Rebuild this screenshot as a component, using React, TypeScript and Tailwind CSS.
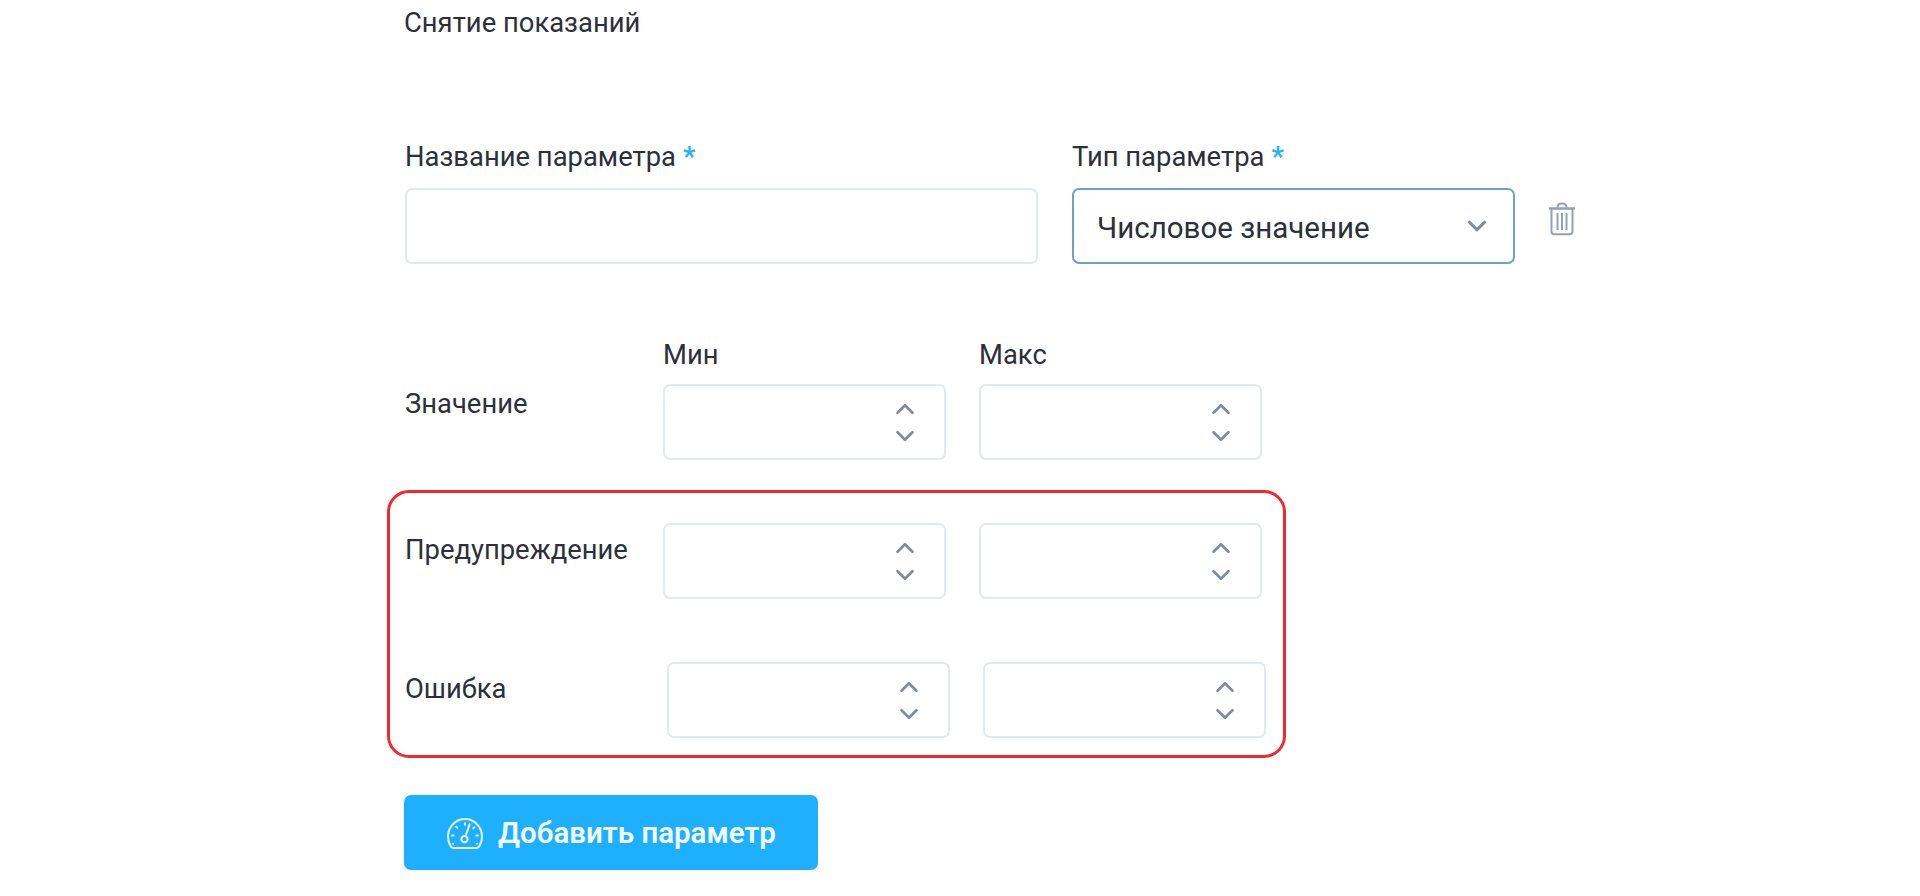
import { ChevronDown, ChevronUp } from 'lucide-react';

const TrashIcon = () => (
  <svg width="30" height="34" viewBox="0 0 30 34" fill="none" stroke="#94a1b0" strokeWidth="2" strokeLinejoin="round">
    <path d="M2 6.500h26" strokeWidth="2.500" />
    <path d="M10.500 5.500c0-2.500 1.500-4 4.500-4s4.500 1.500 4.500 4" />
    <path d="M4.500 7v22.500c0 1.800 1 2.800 2.800 2.800h15.400c1.800 0 2.800-1 2.800-2.800V7" />
    <path d="M10.500 11v17M15 11v17M19.500 11v17" />
  </svg>
);

const GaugeIcon = () => (
  <svg width="38" height="33" viewBox="0 0 36 32" fill="none" stroke="#e3f5ff" strokeWidth="2" strokeLinecap="round" strokeLinejoin="round">
    <path d="M7 30h22c1.500 0 2.400-.6 3-1.800A16.500 16.500 0 0 0 34.500 19C34.500 9.500 27 2 18 2S1.500 9.500 1.500 19c0 3.400.9 6.500 2.500 9.200.6 1.200 1.500 1.800 3 1.800Z" />
    <circle cx="17.500" cy="21.500" r="3" />
    <path d="M18.500 18.500 22.500 7" />
    <path d="M18 6v1.500M9.500 9.500l1 1M5.500 18H7M29 18h1.500M27 10l-1 1M6.500 26h0M29.500 26h0" />
  </svg>
);

const RequiredMark = () => <span className="ml-[7px] font-bold text-[#27b0fb]">*</span>;

const NumberField = () => (
  <div className="flex h-[76px] w-[283px] shrink-0 flex-col items-end justify-center rounded-[7px] border-2 border-[#e4e9ee] bg-white pr-[24px]">
    <ChevronUp size={30} strokeWidth={2.1} className="mb-[-3px] text-[#7f8b99]" />
    <ChevronDown size={30} strokeWidth={2.1} className="text-[#7f8b99]" />
  </div>
);

const LimitRow = ({ label, shift, labelTop }: { label: string; shift?: boolean; labelTop: string }) => (
  <div className="flex">
    <div className={`w-[258px] shrink-0 text-[27.400px] leading-[34px] text-[#2c3038] ${labelTop}`}>{label}</div>
    <div className={shift ? 'ml-[4px] flex gap-[33px]' : 'flex gap-[33px]'}>
      <NumberField />
      <NumberField />
    </div>
  </div>
);

export default function App() {
  return (
    <div className="h-[896px] w-[1920px] overflow-hidden bg-white pl-[404px] font-['Roboto',sans-serif]">
      <div className="pt-[6px] text-[27.400px] leading-[34px] text-[#2c3038]">Снятие показаний</div>

      <div className="mt-[100px] flex items-start">
        <div className="ml-px w-[633px]">
          <div className="text-[27.400px] leading-[34px] text-[#2c3038]">
            Название параметра
            <RequiredMark />
          </div>
          <div className="mt-[14px] h-[76px] rounded-[7px] border-2 border-[#e4e9ee] bg-white" />
        </div>
        <div className="ml-[34px] w-[443px]">
          <div className="text-[27.400px] leading-[34px] text-[#2c3038]">
            Тип параметра
            <RequiredMark />
          </div>
          <div className="mt-[14px] flex h-[76px] items-center justify-between rounded-[7px] border-2 border-[#6f9fd0] bg-white pl-[23px] pr-[21px] pt-[4px] text-[29.500px] text-[#2c3038]">
            <span>Числовое значение</span>
            <ChevronDown size={30} strokeWidth={2.5} className="mb-[5px] text-[#7f8b99]" />
          </div>
        </div>
        <div className="ml-[32px] mt-[62px]">
          <TrashIcon />
        </div>
      </div>

      <div className="mt-[74px] ml-px">
        <div className="flex pl-[258px] text-[27.400px] leading-[34px] text-[#2c3038]">
          <div className="w-[316px]">Мин</div>
          <div>Макс</div>
        </div>
        <div className="mt-[12px]">
          <LimitRow label="Значение" labelTop="pt-[3px]" />
        </div>
      </div>

      <div className="mt-[30px] ml-[-17px] h-[268px] w-[899px] rounded-[22px] border-[3px] border-[#f02a2e] pl-[15px] pt-[30px]">
        <LimitRow label="Предупреждение" labelTop="pt-[10px]" />
        <div className="mt-[63px]">
          <LimitRow label="Ошибка" labelTop="pt-[10px]" shift />
        </div>
      </div>

      <button className="mt-[37px] flex h-[75px] w-[414px] items-center justify-center gap-[14px] rounded-[7px] bg-[#1fb0fd] pt-px text-[29.500px] font-semibold text-[#f4fbff]">
        <GaugeIcon />
        Добавить параметр
      </button>
    </div>
  );
}
